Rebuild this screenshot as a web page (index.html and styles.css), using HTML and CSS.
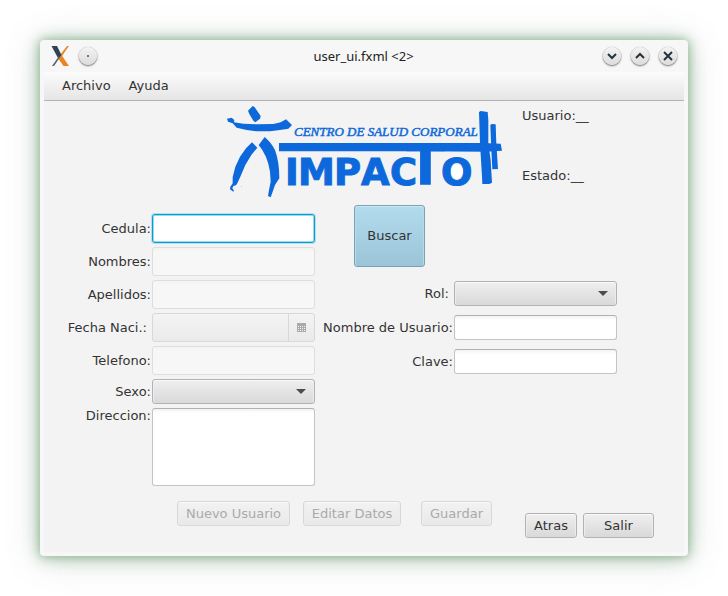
FILE: index.html
```html
<!DOCTYPE html>
<html lang="es">
<head>
<meta charset="utf-8">
<meta name="viewport" content="width=device-width, initial-scale=1">
<title>user_ui.fxml</title>
<link rel="stylesheet" href="styles.css">
</head>
<body>
<div class="window">
  <header class="titlebar">
    <div class="titlebar-side">
      <svg class="app-icon" width="20" height="24" viewBox="0 0 20 24" aria-hidden="true">
        <path d="M17 2h2L11 13.500l-1.500-2z" fill="#e98a33"/>
        <path d="M11.500 11L19 22h-5.500L8.500 15z" fill="#ee8322"/>
        <path d="M1.500 2H7l4.500 9-3 4z" fill="#2f4352"/>
        <path d="M9.500 14L4 22H2l7-10z" fill="#53636f"/>
      </svg>
      <button class="round" type="button" aria-label="Menu"><svg width="18" height="18" viewBox="0 0 18 18"><rect x="8" y="8" width="2" height="2" fill="#777"/></svg></button>
    </div>
    <h1 class="title">user_ui.fxml &lt;2&gt;</h1>
    <div class="titlebar-side titlebar-end">
      <button class="round" type="button" aria-label="Minimizar"><svg width="18" height="18" viewBox="0 0 18 18"><path d="M5 7l4 4 4-4"/></svg></button>
      <button class="round" type="button" aria-label="Maximizar"><svg width="18" height="18" viewBox="0 0 18 18"><path d="M5 11l4-4 4 4"/></svg></button>
      <button class="round" type="button" aria-label="Cerrar"><svg width="18" height="18" viewBox="0 0 18 18"><path d="M5 5l8 8M13 5l-8 8"/></svg></button>
    </div>
  </header>
  <nav class="menubar">
    <button type="button">Archivo</button>
    <button type="button">Ayuda</button>
  </nav>
  <main class="content">
    <div class="banner">
      <svg class="logo" width="290" height="100" viewBox="220 101 290 100" role="img" aria-label="Centro de Salud Corporal Impacto">
        <g fill="#0d69db" transform="translate(220 100) scale(.33333)">
          <path d="M84 32L98 18L104 22L122 48L120 56L106 67L100 62L88 42Z"/>
          <path d="M21 56L35 53L43 60L42 67L70 71L110 73L160 72L182 67L198 58L216 75L205 86L180 90L150 94L110 94L80 90L50 83L38 70L24 65Z"/>
          <path d="M96 127L112 143L94 165L76 195L62 228L52 250L48 256L40 258L37 265L42 272L40 275L30 268L31 260L38 250L38 232L46 200L60 170L78 145Z"/>
          <path d="M134 111Q154 128 165 150Q178 185 178 235L165 255L158 275L152 292L144 288L147 270L152 245L150 215Q142 165 116 135Z"/>
          <path d="M177 129H790L842 131L846 152L800 155L600 154L177 154Z"/>
          <path d="M777 36L782 33L803 36L805 60L805 130L812 180L816 248L808 252L787 252L786 230L780 130Z"/>
          <path d="M811 75L815 72L827 73L829 130L834 207L817 208L814 150Z"/>
          <circle cx="65" cy="260" r="1"/>
        </g>
        <text class="logo-small" x="294" y="136">CENTRO DE SALUD CORPORAL</text>
        <text class="logo-big" y="185"><tspan x="285 298 334 361 390">IMPAC</tspan><tspan class="logo-tall" x="406">T</tspan><tspan x="441">O</tspan></text>
        <ellipse cx="457" cy="171.500" rx="6" ry="7" fill="#fff"/>
      </svg>
      <div class="status">
        <p>Usuario:__</p>
        <p>Estado:__</p>
      </div>
    </div>
    <form class="form">
      <div class="personal">
        <label for="cedula">Cedula:</label>
        <input class="field tall active" id="cedula" type="text">
        <label for="nombres">Nombres:</label>
        <input class="field tall" id="nombres" type="text" disabled>
        <label for="apellidos">Apellidos:</label>
        <input class="field tall" id="apellidos" type="text" disabled>
        <label class="loose" for="fecha">Fecha Naci.:</label>
        <div class="date">
          <input id="fecha" type="text" disabled>
          <button type="button" aria-label="Calendario" disabled>
            <svg width="9" height="9" viewBox="0 0 9 9"><path d="M0 0h9v9H0z" fill="#aaa"/><path d="M1 3.500h7M1 5.500h7M1 7.500h7" stroke="#f2f2f2" stroke-dasharray="1 1"/></svg>
          </button>
        </div>
        <label for="telefono">Telefono:</label>
        <input class="field tall" id="telefono" type="text" disabled>
        <label for="sexo">Sexo:</label>
        <div class="combo"><select id="sexo"></select></div>
        <label class="top" for="direccion">Direccion:</label>
        <textarea class="field area" id="direccion"></textarea>
      </div>
      <div class="account">
        <button class="btn search" type="button">Buscar</button>
        <div class="account-grid">
          <label class="loose" for="rol">Rol:</label>
          <div class="combo"><select id="rol"></select></div>
          <label for="usuario">Nombre de Usuario:</label>
          <input class="field" id="usuario" type="text">
          <label for="clave">Clave:</label>
          <input class="field" id="clave" type="password">
        </div>
      </div>
    </form>
    <footer class="actions">
      <button class="btn wide" type="button" disabled>Nuevo Usuario</button>
      <button class="btn medium" type="button" disabled>Editar Datos</button>
      <button class="btn save" type="button" disabled>Guardar</button>
      <div class="exit">
        <button class="btn small" type="button">Atras</button>
        <button class="btn" type="button">Salir</button>
      </div>
    </footer>
  </main>
</div>
</body>
</html>
```
FILE: styles.css
```css
* { box-sizing: border-box; }

body {
  margin: 0;
  padding: 40px;
  background: #fff;
  color: #333;
  font: 13px/16px "DejaVu Sans", sans-serif;
}

button, input, select, textarea { margin: 0; font: inherit; color: inherit; }
p, h1 { margin: 0; }

.window {
  padding: 0 4px 4px;
  border-radius: 4px;
  background: #f7f7f7;
  box-shadow: 0 0 8px rgba(120, 175, 120, .6), 0 1px 16px rgba(70, 120, 80, .4), 0 2px 34px rgba(70, 110, 80, .25);
}

.titlebar {
  display: flex;
  align-items: center;
  height: 32px;
  padding: 0 7px 0 6px;
}
.titlebar-side { display: flex; flex: 1; align-items: center; gap: 9px; }
.titlebar-end { justify-content: flex-end; gap: 10px; }
.title { font: 13px/16px "Noto Sans", sans-serif; color: #222; }
.app-icon { display: block; }
.round {
  display: grid;
  place-items: center;
  width: 18px;
  height: 18px;
  padding: 0;
  border: 0;
  border-radius: 50%;
  background: linear-gradient(#f3f3f3, #dcdcdc);
  box-shadow: 0 1px 2px rgba(0, 0, 0, .55), 0 0 1px rgba(0, 0, 0, .35);
}
.round svg { display: block; fill: none; stroke: #26323a; stroke-width: 2; }
.round rect { stroke: none; }

.menubar {
  display: flex;
  gap: 18px;
  height: 29px;
  padding: 0 18px;
  border-bottom: 1px solid #b2b2b2;
  background: linear-gradient(#fcfcfc, #e5e5e5);
}
.menubar button { padding: 0; border: 0; background: none; }

.content { padding-bottom: 14px; background: #f3f3f3; }

.banner { display: flex; padding-left: 176px; }
.logo { display: block; flex: none; }
.logo text { fill: #0d69db; }
.logo-small { font: italic 13px "Liberation Serif", serif; stroke: #0d69db; stroke-width: .5; }
.logo-big { font: bold 37px "DejaVu Sans", sans-serif; stroke: #0d69db; stroke-width: 1; }
.logo-tall { font-size: 57px; stroke: none; }
.status { display: grid; gap: 44px; align-content: start; padding: 7px 0 0 12px; }

.form { display: flex; gap: 8px; }
.personal {
  display: grid;
  grid-template-columns: 107px 163px;
  gap: 4px 1px;
  align-items: center;
  align-content: start;
  padding-top: 13px;
}
.form label { text-align: right; white-space: nowrap; }
.form label.loose { padding-right: 4px; }
.form label.top { align-self: start; }

.field {
  display: block;
  width: 100%;
  height: 25px;
  padding: 4px 7px;
  border: 1px solid #c4c4c4;
  border-top-color: #b2b2b2;
  border-radius: 3px;
  outline: 0;
  background: linear-gradient(#f2f2f2, #fff 4px);
}
.tall { height: 29px; }
.area { height: 78px; resize: none; }
.field:disabled { border-color: #dedede; background: linear-gradient(#f3f3f3, #f7f7f7 4px); }
.active {
  border: 1px solid #039ed3;
  background: #fff;
  box-shadow: 0 0 0 1px rgba(3, 158, 211, .25), inset 0 0 0 1px rgba(3, 158, 211, .4);
}

.date {
  display: flex;
  height: 29px;
  border: 1px solid #d8d8d8;
  border-radius: 3px;
  background: linear-gradient(#f3f3f3, #eaeaea);
}
.date input { flex: 1; min-width: 0; padding: 4px 7px; border: 0; background: none; }
.date button {
  display: grid;
  place-items: center;
  width: 26px;
  padding: 0;
  border: 0;
  border-left: 1px solid #d8d8d8;
  background: none;
}
.date svg { display: block; }

.combo { position: relative; }
.combo select {
  display: block;
  width: 100%;
  height: 25px;
  padding: 0 24px 0 7px;
  border: 1px solid #b2b2b2;
  border-radius: 3px;
  appearance: none;
  background: linear-gradient(#efefef, #d9d9d9);
  box-shadow: inset 0 1px #f9f9f9, inset 1px 0 #ededed, inset -1px 0 #ededed;
}
.combo::after {
  content: "";
  position: absolute;
  top: 10px;
  right: 9px;
  border: solid transparent;
  border-width: 5px 5px 0;
  border-top-color: #4d4d4d;
  pointer-events: none;
}

.account { padding-top: 4px; }
.account-grid {
  display: grid;
  grid-template-columns: 130px 163px;
  gap: 9px 1px;
  align-items: center;
  margin-top: 14px;
}

.btn {
  width: 71px;
  height: 25px;
  padding: 0;
  border: 1px solid #b2b2b2;
  border-radius: 3px;
  background: linear-gradient(#efefef, #d9d9d9);
  box-shadow: inset 0 1px #f9f9f9, inset 1px 0 #ededed, inset -1px 0 #ededed;
  white-space: nowrap;
}
.btn:disabled {
  border-color: #d8d8d8;
  background: linear-gradient(#f2f2f2, #e9e9e9);
  color: #aaa;
}
.search {
  display: block;
  height: 62px;
  margin-left: 31px;
  border-color: #7ba1b3;
  background: linear-gradient(#b2dcee, #9cc4d8);
  box-shadow: inset 0 1px #cbe9f5, inset 1px 0 #b5dbea, inset -1px 0 #b5dbea;
}

.actions { display: flex; padding: 15px 30px 0 133px; }
.wide { width: 113px; margin-right: 13px; }
.medium { width: 98px; margin-right: 20px; }
.small { width: 52px; }
.exit { display: flex; gap: 6px; margin-left: auto; padding-top: 12px; }
```
